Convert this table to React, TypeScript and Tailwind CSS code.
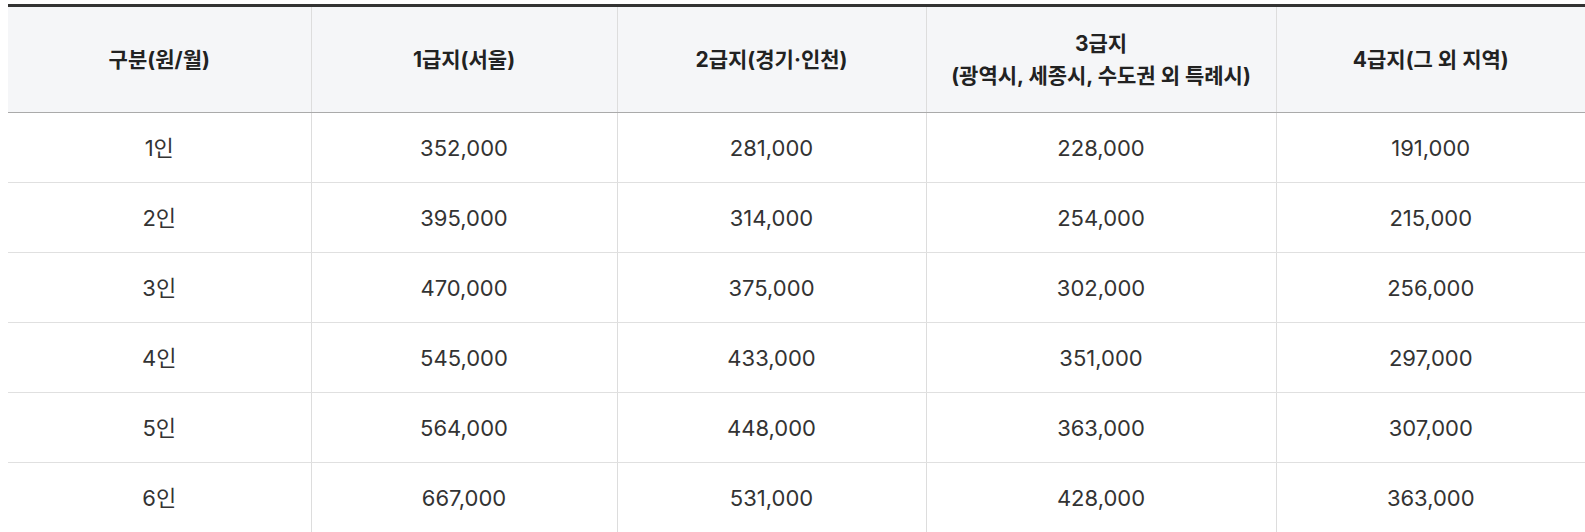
const headers: React.ReactNode[] = [
  "구분(원/월)",
  "1급지(서울)",
  "2급지(경기·인천)",
  <>
    3급지
    <br />
    (광역시, 세종시, 수도권 외 특례시)
  </>,
  "4급지(그 외 지역)",
];

const rows: string[][] = [
  ["1인", "352,000", "281,000", "228,000", "191,000"],
  ["2인", "395,000", "314,000", "254,000", "215,000"],
  ["3인", "470,000", "375,000", "302,000", "256,000"],
  ["4인", "545,000", "433,000", "351,000", "297,000"],
  ["5인", "564,000", "448,000", "363,000", "307,000"],
  ["6인", "667,000", "531,000", "428,000", "363,000"],
];

const widths = ["w-[303px]", "w-[306px]", "w-[309px]", "w-[350px]", "w-[309px]"];

export default function App() {
  return (
    <div
      className="min-h-screen overflow-hidden bg-white pl-2 pt-1"
      style={{ fontFamily: "Inter, 'Noto Sans CJK KR', sans-serif" }}
    >
      <table className="w-[1577px] table-fixed border-collapse border-t-[3px] border-t-[#333333] text-center">
        <colgroup>
          {widths.map((w) => (
            <col key={w} className={w} />
          ))}
        </colgroup>
        <thead>
          <tr>
            {headers.map((h, i) => (
              <th
                key={i}
                className={`h-[107px] border-b border-b-[#aaaaaa] bg-[#f5f6f8] px-3 text-[21px] font-bold leading-[32px] text-[#222222] ${
                  i > 0 ? "border-l border-l-[#dddddd]" : ""
                }`}
              >
                {h}
              </th>
            ))}
          </tr>
        </thead>
        <tbody>
          {rows.map((row) => (
            <tr key={row[0]}>
              {row.map((cell, i) => (
                <td
                  key={i}
                  className={`h-[70px] border-b border-b-[#e0e0e0] px-3 text-[22px] leading-[32px] text-[#333333] ${
                    i > 0 ? "border-l border-l-[#dddddd]" : ""
                  }`}
                >
                  {cell}
                </td>
              ))}
            </tr>
          ))}
        </tbody>
      </table>
    </div>
  );
}
